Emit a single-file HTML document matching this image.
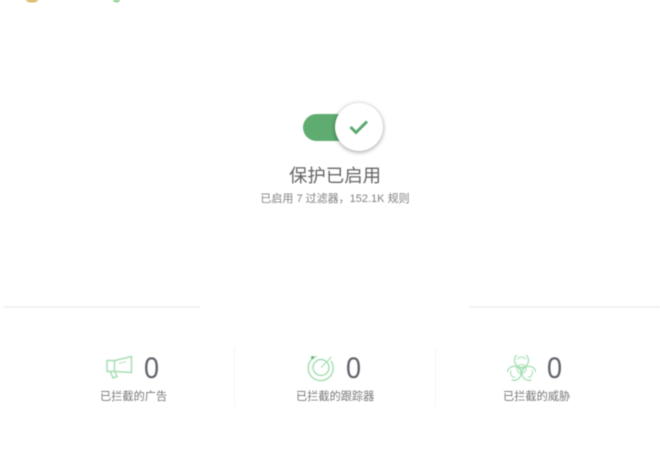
<!DOCTYPE html>
<html lang="zh-CN">
<head>
<meta charset="utf-8">
<style>
html,body{margin:0;padding:0;background:#fff}
body{width:660px;height:450px;overflow:hidden;position:relative;font-family:"Liberation Sans","Noto Sans CJK SC",sans-serif}
#w{position:absolute;left:0;top:0;width:660px;height:450px;filter:blur(.45px)}
.a{position:absolute;white-space:nowrap}
.t{color:#666;font-size:18.4px;line-height:24px;left:235px;width:200px;top:164px;text-align:center}
.s{color:#808080;font-size:11px;line-height:14px;left:235px;width:200px;top:192px;text-align:center}
.n{color:#5f646b;font-size:30px;line-height:32px;top:353px;transform:scaleX(.9);transform-origin:0 50%}
.l{color:#777;font-size:11.2px;line-height:14px;top:390px}
.h{height:2px;background:#f2f2f2;top:306px}
.v{width:1px;height:60px;background:#f5f5f5;top:347px}
</style>
</head>
<body>
<div id="w">
<svg class="a" style="left:0;top:0" width="140" height="4"><ellipse cx="32" cy="0" rx="6" ry="2.500" fill="#d9b25a"/><ellipse cx="116.500" cy="0" rx="3.500" ry="2.500" fill="#8fd08f"/></svg>

<div class="a" style="left:303px;top:114px;width:56px;height:27px;border-radius:14px;background:#5fac70"></div>
<div class="a" style="left:335px;top:103px;width:48px;height:48px;border-radius:50%;background:#fff;box-shadow:0 1px 5px rgba(0,0,0,.4)"></div>
<svg class="a" style="left:347px;top:116px" width="24" height="22" viewBox="0 0 24 22"><path d="M3.500 11L9 16.500L20 5.500" fill="none" stroke="#5aa86c" stroke-width="2.900"/></svg>

<div class="a t">保护已启用</div>
<div class="a s">已启用 7 过滤器，152.1K 规则</div>

<div class="a h" style="left:4px;width:196px"></div>
<div class="a h" style="left:469px;width:191px"></div>
<div class="a v" style="left:234px"></div>
<div class="a v" style="left:435px"></div>

<svg class="a" style="left:104px;top:354px" width="30" height="26" viewBox="0 0 30 26" fill="none" stroke="#a5dfb3" stroke-width="1.500">
<path d="M3 6.500H11L27.500 2.500V18.500L11 17.500H3Z"/><path d="M10.500 6.500V17.500"/><path d="M6.500 18L9 24L13 22.500L11 18"/><path d="M15 9.500L22 7.500" stroke-width=".9"/>
</svg>
<div class="a n" style="left:144px">0</div>
<div class="a l" style="left:100px">已拦截的广告</div>

<svg class="a" style="left:307px;top:353px" width="28" height="29" viewBox="0 0 28 29" fill="none" stroke="#a5dfb3" stroke-width="1.500">
<path d="M9.500 3.300A12.500 12.500 0 1 0 24 8"/><circle cx="14" cy="14.500" r="8"/><path d="M14 14.500L24.500 4" stroke-width="1.200"/><circle cx="5.500" cy="4.500" r="1.500" fill="#60b878" stroke="none"/>
</svg>
<div class="a n" style="left:346px">0</div>
<div class="a l" style="left:296px">已拦截的跟踪器</div>

<svg class="a" style="left:507px;top:353px" width="29" height="29" viewBox="0 0 29 29" fill="none" stroke="#a5dfb3" stroke-width="1.300">
<g id="b"><path d="M10 2A7 7 0 1 0 19 2"/><path d="M10.500 6.500A4.500 4.500 0 0 1 18.500 6.500" stroke-width="1"/></g>
<g transform="rotate(120 14.500 16)"><path d="M10 2A7 7 0 1 0 19 2"/><path d="M10.500 6.500A4.500 4.500 0 0 1 18.500 6.500" stroke-width="1"/></g>
<g transform="rotate(240 14.500 16)"><path d="M10 2A7 7 0 1 0 19 2"/><path d="M10.500 6.500A4.500 4.500 0 0 1 18.500 6.500" stroke-width="1"/></g>
<circle cx="14.500" cy="16" r="4.500" stroke-width="1"/><circle cx="14.500" cy="16" r="1.300" stroke-width="1"/>
</svg>
<div class="a n" style="left:547px">0</div>
<div class="a l" style="left:503px">已拦截的威胁</div>
</div>
</body>
</html>
